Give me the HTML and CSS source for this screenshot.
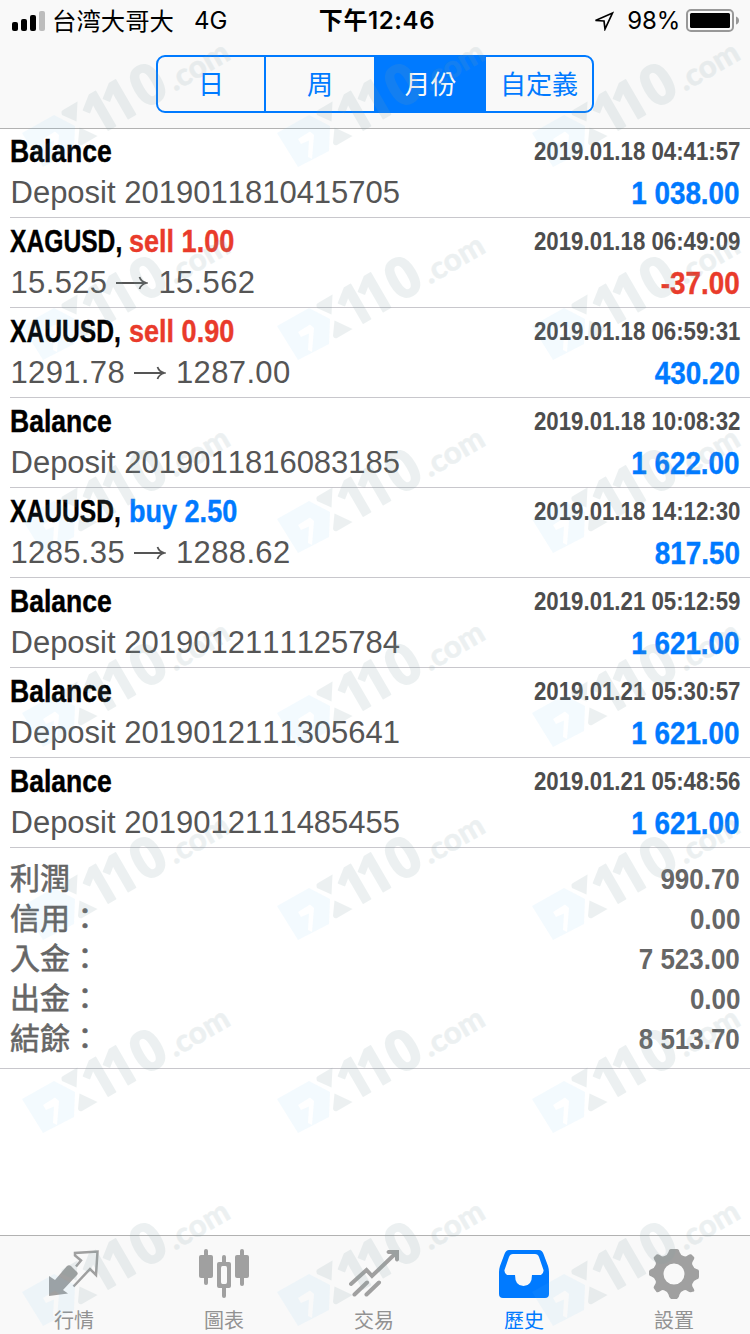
FILE: index.html
```html
<!DOCTYPE html>
<html lang="zh-TW">
<head>
<meta charset="utf-8">
<title>歷史</title>
<link rel="stylesheet" href="styles.css">
</head>
<body>
<div class="screen">
  <header class="header">
    <div class="status">
      <div class="status-left">
        <svg class="signal" width="34" height="20" viewBox="0 0 34 20"><rect x="0" y="11" width="6" height="9" rx="2"/><rect x="9" y="8" width="6" height="12" rx="2"/><rect x="18" y="4" width="6" height="16" rx="2"/><rect x="27" y="0" width="6" height="20" rx="2" fill="#bdbdbd"/></svg>
        <span class="carrier" lang="zh-CN">台湾大哥大</span><span class="net">4G</span>
      </div>
      <div class="clock">下午12:46</div>
      <div class="status-right">
        <svg width="20" height="20" viewBox="0 0 20 20"><path d="M1.500 9.500 18.500 2 11 18 10 10Z" fill="none" stroke="#000" stroke-width="1.700"/></svg>
        <span class="percent">98%</span>
        <svg width="54" height="24" viewBox="0 0 54 24"><rect x="1" y="1" width="46" height="21" rx="4" fill="none" stroke="#989898" stroke-width="2"/><rect x="4" y="4" width="40" height="15" rx="1.500"/><path d="M50 7.500q3 1 3 4t-3 4Z" fill="#989898"/></svg>
      </div>
    </div>
    <nav class="segments"><span>日</span><span>周</span><span class="on">月份</span><span>自定義</span></nav>
  </header>

  <main class="list">
    <div class="row"><div class="line"><b class="name">Balance</b><time>2019.01.18 04:41:57</time></div><div class="line"><span class="detail">Deposit 2019011810415705</span><b class="amount">1 038.00</b></div></div>
    <div class="row"><div class="line"><b class="symbol"><i>XAGUSD,</i></b><b class="side sell">sell 1.00</b><time>2019.01.18 06:49:09</time></div><div class="line"><span class="detail price">15.525<svg class="arrow" viewBox="0 0 32 20"><path d="M0 10H30M23.500 4Q25 8.500 30.500 10 25 11.500 23.500 16"/></svg>15.562</span><b class="amount loss">-37.00</b></div></div>
    <div class="row"><div class="line"><b class="symbol"><i>XAUUSD,</i></b><b class="side sell">sell 0.90</b><time>2019.01.18 06:59:31</time></div><div class="line"><span class="detail price">1291.78<svg class="arrow" viewBox="0 0 32 20"><path d="M0 10H30M23.500 4Q25 8.500 30.500 10 25 11.500 23.500 16"/></svg>1287.00</span><b class="amount">430.20</b></div></div>
    <div class="row"><div class="line"><b class="name">Balance</b><time>2019.01.18 10:08:32</time></div><div class="line"><span class="detail">Deposit 2019011816083185</span><b class="amount">1 622.00</b></div></div>
    <div class="row"><div class="line"><b class="symbol"><i>XAUUSD,</i></b><b class="side buy">buy 2.50</b><time>2019.01.18 14:12:30</time></div><div class="line"><span class="detail price">1285.35<svg class="arrow" viewBox="0 0 32 20"><path d="M0 10H30M23.500 4Q25 8.500 30.500 10 25 11.500 23.500 16"/></svg>1288.62</span><b class="amount">817.50</b></div></div>
    <div class="row"><div class="line"><b class="name">Balance</b><time>2019.01.21 05:12:59</time></div><div class="line"><span class="detail">Deposit 2019012111125784</span><b class="amount">1 621.00</b></div></div>
    <div class="row"><div class="line"><b class="name">Balance</b><time>2019.01.21 05:30:57</time></div><div class="line"><span class="detail">Deposit 2019012111305641</span><b class="amount">1 621.00</b></div></div>
    <div class="row"><div class="line"><b class="name">Balance</b><time>2019.01.21 05:48:56</time></div><div class="line"><span class="detail">Deposit 2019012111485455</span><b class="amount">1 621.00</b></div></div>
    <section class="summary">
      <div><span>利潤</span><b>990.70</b></div>
      <div><span>信用：</span><b>0.00</b></div>
      <div><span>入金：</span><b>7 523.00</b></div>
      <div><span>出金：</span><b>0.00</b></div>
      <div><span>結餘：</span><b>8 513.70</b></div>
    </section>
  </main>

  <nav class="tabs">
    <div class="tab"><svg viewBox="0 0 50 50"><path d="M0 27 6 31 18 17Q20 15.500 22 17L28 23Q29.500 24.500 28 26L14 41 19 44.500 0 47Z"/><path d="M27 17.500 32 11.500 26 6.500V4L48.500 2.500 47 26 41 20 24.500 37.500" fill="none" stroke="#a0a0a0" stroke-width="2.500"/></svg>行情</div>
    <div class="tab"><svg viewBox="0 0 50 50"><rect x="0" y="6" width="14" height="23" rx="2"/><rect x="5" y="0" width="4" height="36" rx="2"/><rect x="36" y="6" width="14" height="23" rx="2"/><rect x="41" y="0" width="4" height="37" rx="2"/><path d="M23 13V8q0-2 2-2t2 2v5h3q2 0 2 2v22q0 2-2 2h-3v8q0 2-2 2t-2-2v-8h-3q-2 0-2-2V15q0-2 2-2ZM23.500 17q-1.500 0-1.500 2v14q0 2 1.500 2h3q1.500 0 1.500-2V19q0-2-1.500-2Z" fill-rule="evenodd"/></svg>圖表</div>
    <div class="tab"><svg viewBox="0 0 50 50"><path d="M2 35 17.500 21 23 27 47 4M5.500 45.500 18 33.500M17.500 45.500 30 33.500" fill="none" stroke="#a0a0a0" stroke-width="4" stroke-linecap="round" stroke-linejoin="miter"/><path d="M39 1H50V11q-2 3-4 0V5H39q-3-2 0-4Z"/></svg>交易</div>
    <div class="tab active"><svg viewBox="0 0 50 50"><path d="M10 1H40Q43 1 44.500 5L49 17Q50 20 50 24V45Q50 49 46 49H4Q0 49 0 45V24Q0 20 1 17L5.500 5Q7 1 10 1ZM14 5Q11 5 10 8L5.500 21Q5 24 8 26H16Q16 37 24.500 37T33 26H42Q45 24 44.500 21L40 8Q39 5 36 5Z" fill-rule="evenodd"/></svg>歷史</div>
    <div class="tab"><svg viewBox="0 0 50 50"><path fill-rule="evenodd" d="M22 0h6q2 0 2.500 3 1 3 4 4 2 1 4-.5 3-2 4-1l2.500 2.500q1 1-1 4-1.500 2-.5 4 1 3 4 4 2.500.5 2.500 2v6q0 2-2.500 2.500-3 1-4 4-1 2 .5 4 2 3 1 4L42.500 43q-1 1-4-1-2-1.500-4-.5-3 1-4 4-.5 3.500-2.500 4.500h-6q-2-1-2.500-4.500-1-3-4-4-2-1-4 .5-3 2-4 1L5 39.500q-1-1 1-4 1.500-2 .5-4-1-3-4-4Q0 27 0 25.500v-3Q0 20.500 2.500 20q3-1 4-4 1-2-.5-4-2-3-1-4L7.500 5.500q1-1 4 1 2 1.500 4 .5 3-1 4-4Q20 0 22 0ZM25 14.500a10.500 10.500 0 1 0 0 21 10.500 10.500 0 1 0 0-21Z"/></svg>設置</div>
  </nav>

  <svg class="watermark" width="750" height="1334" viewBox="0 0 750 1334">
    <defs>
      <g id="mark">
        <path class="wm-logo" fill-rule="evenodd" d="M7 99 39 81 60 92 59 117 28 133ZM28 105 40 97.500 44 101 42 125 38 123 39 106.500 31 110Z"/>
        <g class="wm-ink">
          <path d="M46.500 79Q46 77 48 76L62.500 67.500 61.500 87.500 47 81ZM64.500 93.500 82.500 102 67 111Q64 112 63 109Z"/>
          <g transform="rotate(-30)">
            <text class="wm-num" x="18 41 73.500" y="130">110</text>
            <text class="wm-com" x="109.500" y="130">.com</text>
          </g>
        </g>
      </g>
      <g id="marks"><use href="#mark" x="15"/><use href="#mark" x="270"/><use href="#mark" x="525"/></g>
    </defs>
    <use href="#marks" y="34"/><use href="#marks" y="227"/><use href="#marks" y="420"/><use href="#marks" y="614"/><use href="#marks" y="807"/><use href="#marks" y="1000"/><use href="#marks" y="1193"/>
  </svg>
</div>
</body>
</html>
```
FILE: styles.css
```css
* { box-sizing: border-box; }
body { margin: 0; background: #fff; font-family: "Liberation Sans", "Noto Sans CJK TC", sans-serif; font-kerning: none; }
.screen { position: relative; width: 750px; height: 1334px; overflow: hidden; display: flex; flex-direction: column; }

.header { height: 129px; background: #f9f9f9; border-bottom: 1px solid #b2b2b2; display: flex; flex-direction: column; align-items: center; }
.status { width: 100%; height: 40px; margin-bottom: 15px; padding: 0 10px 0 12px; display: grid; grid-template-columns: 1fr auto 1fr; align-items: center; font-family: Inter, "Noto Sans CJK TC", sans-serif; font-size: 24px; line-height: 40px; white-space: nowrap; }
.status-left, .status-right { display: flex; align-items: center; }
.status-right { justify-content: flex-end; }
.carrier { font-family: "Noto Sans CJK SC", sans-serif; margin-left: 6px; padding-bottom: 2px; font-size: 24.4px; }
.net { margin-left: 20px; }
.clock { font-weight: 600; letter-spacing: .6px; padding-left: 2px; }
.percent { margin: 0 6px 0 13px; letter-spacing: -.2px; }

.segments { width: 438px; height: 58px; border: 2px solid #007aff; border-radius: 9px; overflow: hidden; display: grid; grid-template-columns: 106px 110px 112px 1fr; color: #007aff; font-family: "Noto Sans CJK TC", sans-serif; font-size: 26px; line-height: 52px; text-align: center; }
.segments span:nth-child(2) { border-left: 2px solid #007aff; }
.segments .on { background: #007aff; color: #f9f9f9; padding-left: 1px; }

.list { flex: 1; }
.row { height: 90px; margin-left: 10px; padding: 2px 10px 0 0; border-bottom: 1px solid #c8c7cc; }
.row:first-child { height: 89px; padding-top: 1px; }
.line { height: 42px; display: flex; align-items: center; line-height: 42px; white-space: nowrap; }
.name, .side, .symbol i { display: block; font-size: 32px; font-weight: bold; font-style: normal; transform-origin: left; transform: scaleX(.83); }
.name, .side, .symbol i, .amount { -webkit-text-stroke: .4px currentColor; }
.symbol { width: 118.5px; }
.symbol i { transform: scaleX(.77); }
.side { transform: scaleX(.845); }
.sell { color: #e93b2b; }
.buy { color: #007aff; }
time { margin-left: auto; color: #4d4d4d; font-size: 26px; font-weight: bold; transform-origin: right; transform: scaleX(.855); }
.detail { color: #555; font-size: 31px; padding-left: .5px; }
.price { letter-spacing: .35px; }
.arrow { width: 32px; height: 20px; margin: 0 10px 0 9px; fill: none; stroke: #555; stroke-width: 1.8; vertical-align: 0; }
.amount { margin-left: auto; color: #007aff; font-size: 32px; transform-origin: right; transform: scaleX(.87); }
.loss { color: #e93b2b; }

.summary { padding: 11px 10px 9px; border-bottom: 1px solid #c8c7cc; color: #666; }
.summary div { height: 40px; display: flex; justify-content: space-between; line-height: 39px; }
.summary span { font-family: "Noto Sans CJK TC", sans-serif; font-size: 30px; line-height: 35px; -webkit-text-stroke: .6px #666; }
.summary b { font-size: 30px; transform-origin: right; transform: scaleX(.865); }

.tabs { height: 99px; padding-right: 1px; margin-left: -1px; background: #f9f9f9; border-top: 1px solid #b2b2b2; display: grid; grid-template-columns: repeat(5, 150px); color: #929292; font-family: "Noto Sans CJK TC", sans-serif; font-size: 20px; line-height: 24px; }
.tab { display: flex; flex-direction: column; align-items: center; gap: 9px; padding-top: 13px; }
.tab svg { width: 50px; height: 50px; fill: #a0a0a0; }
.active { color: #007aff; }
.tab.active svg { fill: #007aff; }

.watermark { position: absolute; left: 0; top: 0; pointer-events: none; }
.wm-logo { fill: rgba(100, 195, 240, .08); }
.wm-ink { fill: #82a0a5; stroke: #82a0a5; stroke-width: 0; opacity: .145; }
.wm-num { font: bold 56px "Open Sans", sans-serif; stroke-width: 1.5px; stroke-linejoin: round; }
.wm-com { font: 900 31px Lato, sans-serif; stroke-width: .5px; }
```
